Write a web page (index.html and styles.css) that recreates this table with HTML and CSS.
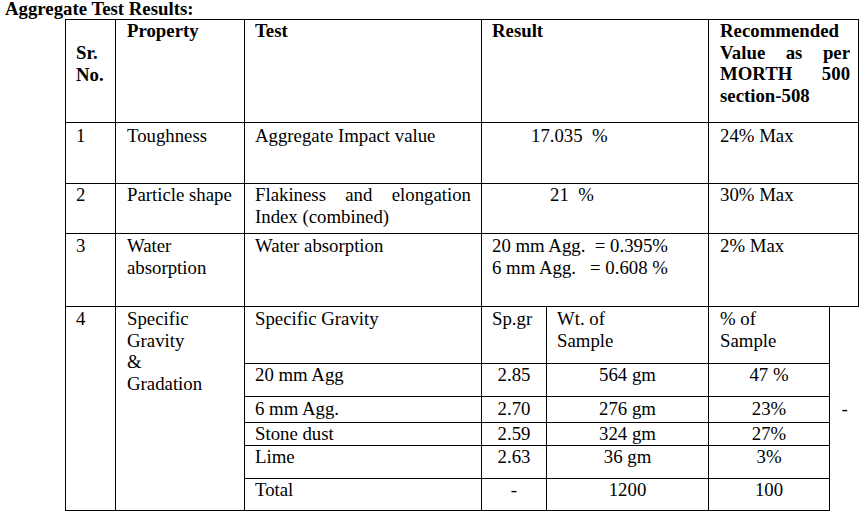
FILE: index.html
```html
<!DOCTYPE html>
<html lang="en">
<head>
<meta charset="utf-8">
<title>Aggregate Test Results</title>
<link rel="stylesheet" href="styles.css">
</head>
<body>
<div class="page">
  <div class="title">Aggregate Test Results:</div>
  <table class="results">
    <colgroup>
      <col class="c-sr">
      <col class="c-prop">
      <col class="c-test">
      <col class="c-res-a">
      <col class="c-res-b">
      <col class="c-rec-a">
      <col class="c-rec-b">
    </colgroup>
    <tbody>
      <tr class="h-head">
        <th class="col1 pad-sr">Sr.<br>No.</th>
        <th class="col2">Property</th>
        <th class="col3">Test</th>
        <th class="col4" colspan="2">Result</th>
        <th class="col5 just" colspan="2">Recommended Value as per MORTH 500 section-508</th>
      </tr>
      <tr class="h-r1">
        <td class="col1 pt2">1</td>
        <td class="col2 pt2">Toughness</td>
        <td class="col3 pt2">Aggregate Impact value</td>
        <td class="col4 pt2 ind-1 pre" colspan="2">17.035  %</td>
        <td class="col5 pt2" colspan="2">24% Max</td>
      </tr>
      <tr class="h-r2">
        <td class="col1">2</td>
        <td class="col2">Particle shape</td>
        <td class="col3 just">Flakiness and elongation Index (combined)</td>
        <td class="col4 ind-2 pre" colspan="2">21  %</td>
        <td class="col5" colspan="2">30% Max</td>
      </tr>
      <tr class="h-r3">
        <td class="col1 pt1">3</td>
        <td class="col2 pt1">Water<br>absorption</td>
        <td class="col3 pt1">Water absorption</td>
        <td class="col4 pt1 pre" colspan="2">20 mm Agg.  = 0.395%
6 mm Agg.   = 0.608 %</td>
        <td class="col5 pt1" colspan="2">2% Max</td>
      </tr>
      <tr class="h-4a">
        <td class="col1 pt1" rowspan="6">4</td>
        <td class="col2 pt1" rowspan="6">Specific<br>Gravity<br>&amp;<br>Gradation</td>
        <td class="col3 pt1">Specific Gravity</td>
        <td class="col4 pt1">Sp.gr</td>
        <td class="col4 pt1">Wt. of<br>Sample</td>
        <td class="col5 pt1">% of<br>Sample</td>
        <td class="dash" rowspan="6">-</td>
      </tr>
      <tr class="h-4b">
        <td class="col3">20 mm Agg</td>
        <td class="num">2.85</td>
        <td class="num">564 gm</td>
        <td class="num">47 %</td>
      </tr>
      <tr class="h-4c">
        <td class="col3 pt1">6 mm Agg.</td>
        <td class="num pt1">2.70</td>
        <td class="num pt1">276 gm</td>
        <td class="num pt1">23%</td>
      </tr>
      <tr class="h-4d">
        <td class="col3">Stone dust</td>
        <td class="num">2.59</td>
        <td class="num">324 gm</td>
        <td class="num">27%</td>
      </tr>
      <tr class="h-4e">
        <td class="col3">Lime</td>
        <td class="num">2.63</td>
        <td class="num">36 gm</td>
        <td class="num">3%</td>
      </tr>
      <tr class="h-4f">
        <td class="col3">Total</td>
        <td class="num">-</td>
        <td class="num">1200</td>
        <td class="num">100</td>
      </tr>
    </tbody>
  </table>
</div>
</body>
</html>
```

FILE: styles.css
```css
html, body {
  margin: 0;
  padding: 0;
  background: #ffffff;
}

body {
  font-family: "Liberation Serif", "Times New Roman", serif;
  font-size: 18.8px;
  line-height: 21.7px;
  color: #000000;
}

.page {
  width: 864px;
}

.title {
  font-weight: bold;
  line-height: 17px;
  height: 19px;
  padding-left: 5px;
  white-space: nowrap;
}

.results {
  box-sizing: border-box;
  margin-left: 65px;
  width: 794px;
  table-layout: fixed;
  border-collapse: separate;
  border-spacing: 0;
  border-top: 1px solid #000;
  border-left: 1px solid #000;
}

.c-sr { width: 50px; }
.c-prop { width: 129px; }
.c-test { width: 237px; }
.c-res-a { width: 65px; }
.c-res-b { width: 162px; }
.c-rec-a { width: 121px; }
.c-rec-b { width: 29px; }

.results th,
.results td {
  box-sizing: border-box;
  border-right: 1px solid #000;
  border-bottom: 1px solid #000;
  padding: 0 8px 0 10px;
  vertical-align: top;
  text-align: left;
  font-weight: normal;
}

.results th {
  font-weight: bold;
}

.results .col2 { padding-left: 11px; }
.results .col3 { padding-right: 10px; }
.results .col5 { padding-left: 11px; }

.results .pad-sr { padding-top: 22px; }
.results .pt1 { padding-top: 1px; }
.results .pt2 { padding-top: 2px; }

.just { text-align: justify; }
.results .just { text-align: justify; }

.pre { white-space: pre; }

.results .ind-1 { padding-left: 49px; }
.results .ind-2 { padding-left: 68px; }

.results .num {
  text-align: center;
  padding-left: 0;
  padding-right: 0;
}

.results .dash {
  border-right: none;
  border-bottom: none;
  padding: 0;
  text-align: center;
  vertical-align: middle;
}

.h-head { height: 103px; }
.h-r1 { height: 61px; }
.h-r2 { height: 50px; }
.h-r3 { height: 73px; }
.h-4a { height: 57px; }
.h-4b { height: 33px; }
.h-4c { height: 26px; }
.h-4d { height: 23px; }
.h-4e { height: 33px; }
.h-4f { height: 32px; }
```
